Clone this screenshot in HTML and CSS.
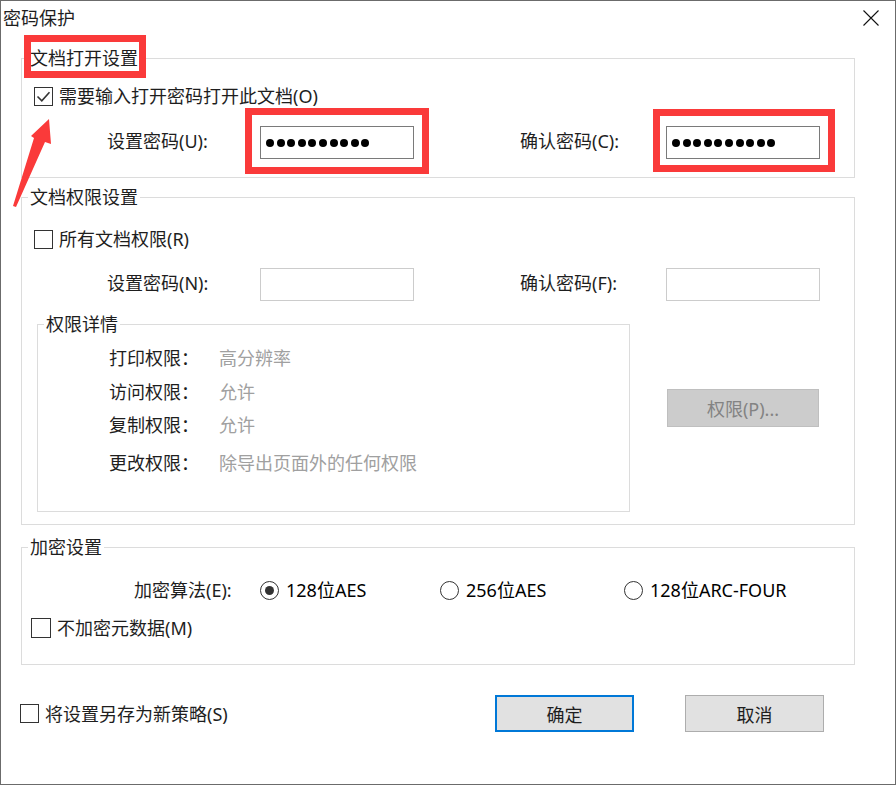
FILE: index.html
```html
<!DOCTYPE html>
<html lang="zh-CN">
<head>
    <meta charset="UTF-8">
    <title>密码保护</title>
    <link rel="stylesheet" href="styles.css">
</head>
<body>
    <div class="dialog">
        <div class="title-bar">
            <span class="title">密码保护</span>
            <span class="close-btn">
                <svg width="16" height="16" viewBox="0 0 16 16"><path d="M0.5 0.5 L15.5 15.5 M15.5 0.5 L0.5 15.5" stroke="#111" stroke-width="1.1" fill="none"/></svg>
            </span>
        </div>

        <!-- 文档打开设置 -->
        <fieldset class="group group-open">
            <legend><span class="mark">文档打开设置</span></legend>
            <div class="group-body">
                <div class="check-row">
                    <span class="checkbox">
                        <svg width="17" height="17" viewBox="0 0 17 17"><path d="M2.5 8.5 L6.8 12.8 L14.5 4.2" stroke="#333" stroke-width="1.6" fill="none"/></svg>
                    </span>
                    <span>需要输入打开密码打开此文档(O)</span>
                </div>
                <div class="pw-row">
                    <span class="pw-label">设置密码(U):</span>
                    <div class="field marked">
                        <div class="dots"><i></i><i></i><i></i><i></i><i></i><i></i><i></i><i></i><i></i><i></i></div>
                    </div>
                    <span class="pw-label pw-label-right">确认密码(C):</span>
                    <div class="field marked marked-right">
                        <div class="dots"><i></i><i></i><i></i><i></i><i></i><i></i><i></i><i></i><i></i><i></i></div>
                    </div>
                </div>
            </div>
        </fieldset>

        <!-- 文档权限设置 -->
        <fieldset class="group group-perm">
            <legend>文档权限设置</legend>
            <div class="group-body">
                <div class="check-row">
                    <span class="checkbox"></span>
                    <span>所有文档权限(R)</span>
                </div>
                <div class="pw-row">
                    <span class="pw-label">设置密码(N):</span>
                    <div class="field disabled"></div>
                    <span class="pw-label pw-label-right">确认密码(F):</span>
                    <div class="field disabled"></div>
                </div>
                <div class="details-wrap">
                    <fieldset class="group details">
                        <legend>权限详情</legend>
                        <div class="details-body">
                            <div class="detail-row"><span class="detail-label">打印权限：</span><span class="detail-value">高分辨率</span></div>
                            <div class="detail-row"><span class="detail-label">访问权限：</span><span class="detail-value">允许</span></div>
                            <div class="detail-row"><span class="detail-label">复制权限：</span><span class="detail-value">允许</span></div>
                            <div class="detail-row"><span class="detail-label">更改权限：</span><span class="detail-value">除导出页面外的任何权限</span></div>
                        </div>
                    </fieldset>
                    <button class="btn btn-disabled">权限(P)...</button>
                </div>
            </div>
        </fieldset>

        <!-- 加密设置 -->
        <fieldset class="group group-crypt">
            <legend>加密设置</legend>
            <div class="group-body">
                <div class="algo-row">
                    <span class="algo-label">加密算法(E):</span>
                    <div class="algo-options">
                        <label class="option"><span class="radio on"></span><span>128位AES</span></label>
                        <label class="option"><span class="radio"></span><span>256位AES</span></label>
                        <label class="option"><span class="radio"></span><span>128位ARC-FOUR</span></label>
                    </div>
                </div>
                <div class="check-row">
                    <span class="checkbox"></span>
                    <span>不加密元数据(M)</span>
                </div>
            </div>
        </fieldset>

        <div class="footer">
            <div class="check-row save-row">
                <span class="checkbox"></span>
                <span>将设置另存为新策略(S)</span>
            </div>
            <button class="btn btn-primary">确定</button>
            <button class="btn btn-cancel">取消</button>
        </div>

        <svg class="arrow" width="44" height="94" viewBox="0 0 44 94">
            <polygon points="38,3 20,20 23,22 2,90 5,91 34,26 40,28" fill="#fa3a3a"/>
        </svg>
    </div>
</body>
</html>
```

FILE: styles.css
```css
* {
    margin: 0;
    padding: 0;
    box-sizing: border-box;
}

body {
    font-family: "Noto Sans", "Noto Sans CJK SC", sans-serif;
    font-size: 18px;
    line-height: 24px;
    color: #1e1e1e;
    background: #fff;
}

.dialog {
    position: relative;
    width: 896px;
    height: 785px;
    border: 1px solid #6b6b6b;
    background: #fff;
}

.title-bar {
    display: flex;
    align-items: center;
    justify-content: space-between;
    height: 34px;
    padding-left: 2px;
}

.close-btn {
    display: flex;
    width: 16px;
    height: 16px;
    margin-right: 16px;
}

/* group boxes */
.group {
    border: 1px solid #dcdcdc;
    padding: 0;
    min-width: 0;
}

.group > legend {
    margin-left: 6px;
    padding: 0 2px;
    line-height: 23px;
    font-size: 18px;
}

.group-open,
.group-perm,
.group-crypt {
    width: 834px;
    margin-left: 20px;
}

.group-open {
    margin-top: 12px;
}

.group-open .group-body {
    padding: 11px 0 18px 12px;
}

.group-perm {
    margin-top: 8px;
}

.group-perm .group-body {
    padding: 15px 0 12px 12px;
}

.group-crypt {
    margin-top: 11px;
}

.group-crypt .group-body {
    padding: 16px 0 21px 12px;
}

/* red annotation */
.mark,
.marked {
    position: relative;
}

.mark::after,
.marked::after {
    content: "";
    position: absolute;
    border: 7px solid #fa3a3a;
    pointer-events: none;
}

.mark::after {
    top: -11px;
    bottom: -8px;
    left: -6px;
    right: -8px;
}

.marked::after {
    top: -19px;
    bottom: -16px;
    left: -16px;
    right: -16px;
}

.marked-right::after {
    top: -18px;
    bottom: -14px;
    left: -14px;
    right: -16px;
}

.arrow {
    position: absolute;
    left: 10px;
    top: 115px;
}

/* checkbox rows */
.check-row {
    display: flex;
    align-items: center;
    gap: 6px;
    height: 30px;
}

.checkbox {
    display: flex;
    align-items: center;
    justify-content: center;
    width: 19px;
    height: 19px;
    border: 1px solid #333;
    flex-shrink: 0;
}

/* password rows */
.pw-row {
    display: flex;
    align-items: center;
    height: 33px;
    margin-top: 14px;
    padding-left: 73px;
}

.group-open .pw-row {
    margin-top: 15px;
}

.pw-label {
    width: 153px;
    margin-top: -3px;
}

.pw-label-right {
    width: 146px;
    margin-left: 106px;
}

.field {
    width: 154px;
    height: 33px;
    border: 1px solid #7a7a7a;
    display: flex;
    align-items: center;
    padding-left: 5px;
}

.field.disabled {
    border-color: #cccccc;
}

.dots {
    display: flex;
    gap: 2.6px;
}

.dots i {
    width: 8px;
    height: 8px;
    border-radius: 50%;
    background: #000;
}

/* permission details */
.details-wrap {
    display: flex;
    align-items: flex-start;
    margin-top: 12px;
    margin-left: 3px;
}

.details {
    width: 593px;
}

.details-body {
    padding: 10px 0 36px 71px;
}

.detail-row {
    display: flex;
}

.detail-row + .detail-row {
    margin-top: 10px;
}

.detail-row:nth-child(3) {
    margin-top: 9px;
}

.detail-row:nth-child(4) {
    margin-top: 14px;
}

.detail-label {
    width: 110px;
}

.detail-value {
    color: #a0a0a0;
}

/* buttons */
.btn {
    font-family: inherit;
    font-size: 18px;
    background: #e1e1e1;
    border: 1px solid #adadad;
    color: #1e1e1e;
    width: 139px;
    height: 37px;
}

.btn-disabled {
    width: 152px;
    height: 38px;
    margin-left: 37px;
    margin-top: 76px;
    background: #cccccc;
    border-color: #bfbfbf;
    color: #838383;
}

.btn-primary {
    border: 2px solid #0078d7;
}

.btn-cancel {
    margin-left: 51px;
}

/* encryption */
.algo-row {
    display: flex;
    align-items: center;
    height: 30px;
    padding-left: 100px;
}

.algo-label {
    width: 126px;
}

.algo-options {
    display: grid;
    grid-template-columns: 180px 184px auto;
}

.option {
    display: flex;
    align-items: center;
    gap: 7px;
    color: #000;
}

.radio {
    position: relative;
    width: 19px;
    height: 19px;
    border: 1px solid #333;
    border-radius: 50%;
}

.radio.on::after {
    content: "";
    position: absolute;
    top: 4px;
    left: 4px;
    width: 9px;
    height: 9px;
    border-radius: 50%;
    background: #333;
}

.group-crypt .check-row {
    margin-top: 8px;
    margin-left: -3px;
}

.group-crypt .checkbox {
    width: 20px;
    height: 20px;
}

/* footer */
.footer {
    display: flex;
    align-items: center;
    height: 37px;
    margin-top: 30px;
    padding-left: 19px;
}

.save-row {
    width: 475px;
}
```
